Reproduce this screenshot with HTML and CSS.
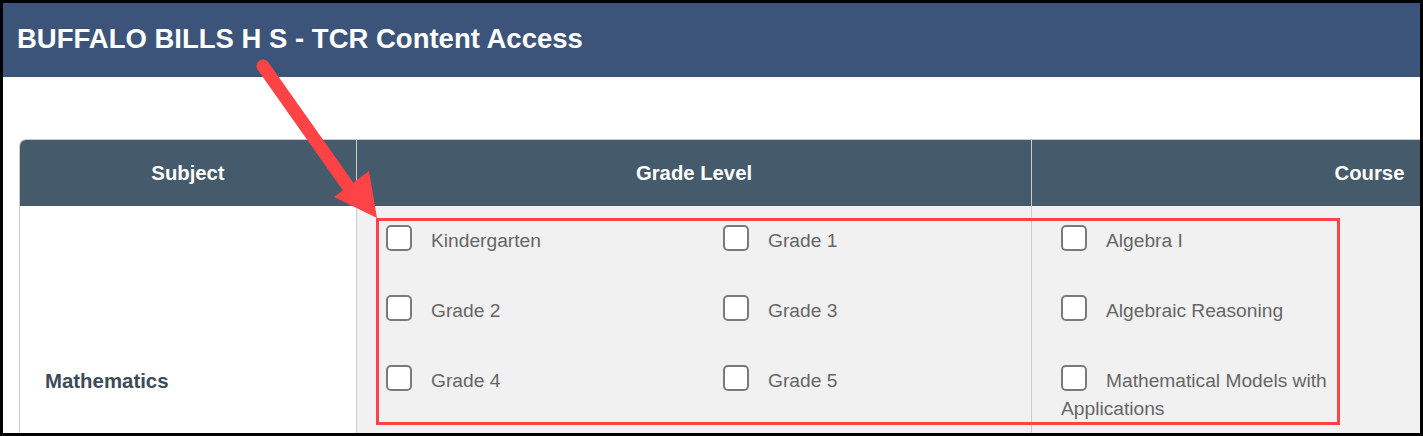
FILE: index.html
```html
<!DOCTYPE html>
<html>
<head>
<meta charset="utf-8">
<link rel="stylesheet" href="styles.css">
</head>
<body>
<header class="topbar">
  <h1 class="title">BUFFALO BILLS H S - TCR Content Access</h1>
</header>
<main class="content">
  <div class="access-table">
    <div class="th">Subject</div>
    <div class="th">Grade Level</div>
    <div class="th">Course</div>

    <div class="td subject">Mathematics</div>
    <div class="td options">
      <div class="options-grid">
        <label class="opt"><span class="box"></span>Kindergarten</label>
        <label class="opt"><span class="box"></span>Grade 1</label>
        <label class="opt"><span class="box"></span>Grade 2</label>
        <label class="opt"><span class="box"></span>Grade 3</label>
        <label class="opt"><span class="box"></span>Grade 4</label>
        <label class="opt"><span class="box"></span>Grade 5</label>
      </div>
    </div>
    <div class="td options">
      <div class="options-grid single">
        <label class="opt"><span class="box"></span>Algebra I</label>
        <label class="opt"><span class="box"></span>Algebraic Reasoning</label>
        <label class="opt"><span class="box"></span>Mathematical Models with Applications</label>
      </div>
    </div>
  </div>
</main>

<div class="highlight"></div>
<svg class="arrow" width="1423" height="436" viewBox="0 0 1423 436">
  <line x1="263" y1="66" x2="352" y2="192" stroke="#fd4346" stroke-width="13" stroke-linecap="round"/>
  <polygon points="377,218 334,197 369,171" fill="#fd4346"/>
</svg>
<div class="frame"></div>
</body>
</html>
```

FILE: styles.css
```css
html, body {
  margin: 0;
  padding: 0;
  overflow: hidden;
  background: #ffffff;
  font-family: "Liberation Sans", Arial, sans-serif;
}

body {
  width: 1423px;
  height: 436px;
  position: relative;
}

.topbar {
  background: #3c5479;
  height: 77px;
  display: flex;
  align-items: center;
  padding-left: 17px;
}

.title {
  margin: 0;
  color: #ffffff;
  font-size: 27.5px;
  font-weight: bold;
  padding-top: 1px;
}

.content {
  padding: 62px 0 0 19px;
}

.access-table {
  display: grid;
  grid-template-columns: 337px 675px 675px;
  grid-template-rows: 66px minmax(350px, auto);
  width: 1687px;
  border-left: 1px solid #cccccc;
  border-top: 1px solid #cccccc;
  border-top-left-radius: 7px;
  overflow: hidden;
}

.th {
  background: #455a6a;
  color: #ffffff;
  font-weight: bold;
  font-size: 20.3px;
  display: flex;
  align-items: center;
  justify-content: center;
  border-right: 1px solid #cccccc;
}

.th:nth-child(3) { border-right: none; }

.td {
  border-right: 1px solid #cccccc;
}

.subject {
  background: #ffffff;
  display: flex;
  align-items: center;
  padding-left: 25px;
  font-size: 20.4px;
  font-weight: bold;
  color: #3d4b5a;
}

.options {
  background: #f1f1f1;
}

.options:last-child { border-right: none; }

.options-grid {
  display: grid;
  grid-template-columns: 337px 337px;
}

.options-grid.single {
  grid-template-columns: 337px;
}

.opt {
  display: block;
  padding: 21px 20px 21px 29px;
  font-size: 19.2px;
  line-height: 28px;
  color: #666666;
}

.box {
  display: inline-block;
  width: 26px;
  height: 26px;
  box-sizing: border-box;
  border: 2px solid #7a7a7a;
  border-radius: 5px;
  background: #ffffff;
  vertical-align: middle;
  margin-right: 19px;
  position: relative;
  top: -4px;
}

.highlight {
  position: absolute;
  left: 376px;
  top: 218px;
  width: 964px;
  height: 207px;
  box-sizing: border-box;
  border: 3px solid #fd4346;
}

.arrow {
  position: absolute;
  left: 0;
  top: 0;
}

.frame {
  position: absolute;
  inset: 0;
  border: 3px solid #000000;
  pointer-events: none;
}
```
